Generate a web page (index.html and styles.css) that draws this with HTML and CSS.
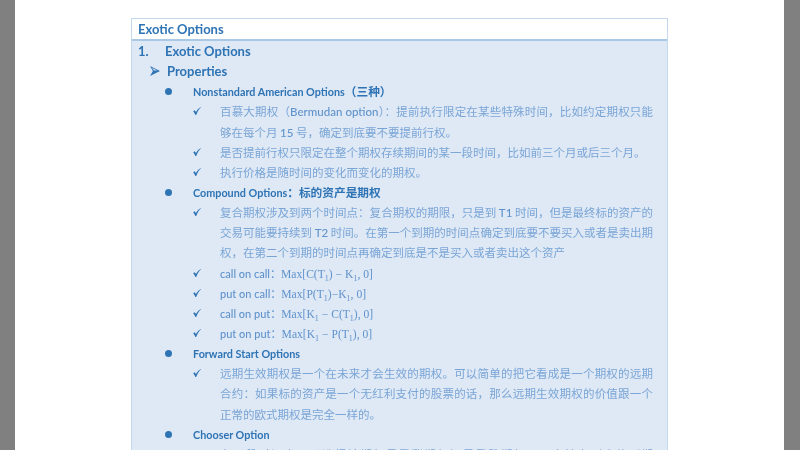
FILE: index.html
```html
<!DOCTYPE html>
<html lang="zh">
<head>
<meta charset="utf-8">
<title>Exotic Options</title>
<link rel="stylesheet" href="styles.css">
</head>
<body>
<svg class="defs" aria-hidden="true"><symbol id="tick" viewBox="0 0 8 8"><path d="M0.2 4.3 L1.7 3.3 L3 5 C4.2 2.9 5.8 1.1 7.8 0 L8 0.3 C6 2.2 4.4 4.8 3.2 8 L2.4 8 C1.8 6.4 1.1 5.3 0.2 4.3 Z"/></symbol></svg>
<div class="rail"></div>
<div class="page">
  <section class="box">
    <header class="box-title">Exotic Options</header>
    <div class="box-body">
      <div class="row h1"><span class="num">1.</span><span>Exotic Options</span></div>
      <div class="row h2"><svg class="arrow" viewBox="0 0 9 9" aria-hidden="true"><path d="M0 0 L9 4.6 L0 9 L2.6 4.6 Z" fill="#2e74b5"/><path d="M1.7 1.5 L6.4 4 L3.6 4 Z" fill="#dfe8f5"/></svg><span>Properties</span></div>
      <div class="row h3"><span class="dot"></span><span>Nonstandard American Options<span class="zh">（三种）</span></span></div>
      <div class="row item"><svg class="check" aria-hidden="true"><use href="#tick"/></svg><div class="text"><p class="fill">百慕大期权（<span class="en">Bermudan option</span>）：提前执行限定在某些特殊时间，比如约定期权只能</p><p>够在每个月 <span class="en">15</span> 号，确定到底要不要提前行权。</p></div></div>
      <div class="row item"><svg class="check" aria-hidden="true"><use href="#tick"/></svg><div class="text"><p>是否提前行权只限定在整个期权存续期间的某一段时间，比如前三个月或后三个月。</p></div></div>
      <div class="row item"><svg class="check" aria-hidden="true"><use href="#tick"/></svg><div class="text"><p>执行价格是随时间的变化而变化的期权。</p></div></div>
      <div class="row h3"><span class="dot"></span><span>Compound Options<span class="zh">：标的资产是期权</span></span></div>
      <div class="row item"><svg class="check" aria-hidden="true"><use href="#tick"/></svg><div class="text"><p class="fill">复合期权涉及到两个时间点：复合期权的期限，只是到 <span class="en">T1</span> 时间，但是最终标的资产的</p><p class="fill">交易可能要持续到 <span class="en">T2</span> 时间。在第一个到期的时间点确定到底要不要买入或者是卖出期</p><p>权，在第二个到期的时间点再确定到底是不是买入或者卖出这个资产</p></div></div>
      <div class="row item"><svg class="check" aria-hidden="true"><use href="#tick"/></svg><div class="text"><p class="en">call on call：<span class="math">Max[C(T<sub>1</sub>) − K<sub>1</sub>, 0]</span></p></div></div>
      <div class="row item"><svg class="check" aria-hidden="true"><use href="#tick"/></svg><div class="text"><p class="en">put on call：<span class="math">Max[P(T<sub>1</sub>)−K<sub>1</sub>, 0]</span></p></div></div>
      <div class="row item"><svg class="check" aria-hidden="true"><use href="#tick"/></svg><div class="text"><p class="en">call on put：<span class="math">Max[K<sub>1</sub> − C(T<sub>1</sub>), 0]</span></p></div></div>
      <div class="row item"><svg class="check" aria-hidden="true"><use href="#tick"/></svg><div class="text"><p class="en">put on put：<span class="math">Max[K<sub>1</sub> − P(T<sub>1</sub>), 0]</span></p></div></div>
      <div class="row h3"><span class="dot"></span><span>Forward Start Options</span></div>
      <div class="row item"><svg class="check" aria-hidden="true"><use href="#tick"/></svg><div class="text"><p class="fill">远期生效期权是一个在未来才会生效的期权。可以简单的把它看成是一个期权的远期</p><p class="fill">合约：如果标的资产是一个无红利支付的股票的话，那么远期生效期权的价值跟一个</p><p>正常的欧式期权是完全一样的。</p></div></div>
      <div class="row h3"><span class="dot"></span><span>Chooser Option</span></div>
      <div class="row item"><svg class="check" aria-hidden="true"><use href="#tick"/></svg><div class="text"><p class="fill">在一段时间内可以选择该期权是看涨期权还是看跌期权，一直持有到合约到期</p></div></div>
    </div>
  </section>
</div>
<div class="scrollbar"></div>
</body>
</html>
```
FILE: styles.css
```css
html, body {
  margin: 0;
  height: 450px;
  overflow: hidden;
  background: #fff;
}
body {
  display: flex;
  font-family: "Noto Sans CJK SC", Lato, sans-serif;
  color: #79a5d6;
}
.defs {
  display: none;
}
.rail {
  flex: none;
  width: 15px;
  background: #808080;
}
.page {
  flex: 1;
  padding: 18px 0 0 116px;
  filter: blur(0.35px);
}
.scrollbar {
  flex: none;
  width: 16px;
  background: #808080;
}
.box {
  width: 537px;
  box-sizing: border-box;
  border: 1px solid #c5d9ee;
  background: #dfe8f5;
  font-size: 11.5px;
}
.box-title {
  height: 20px;
  padding-left: 6px;
  background: #fff;
  border-bottom: 2px solid #a9c8e6;
  font: 700 13px/21px Lato, sans-serif;
  color: #2e74b5;
}
.box-body {
  padding: 1px 14px 0 6px;
  height: 600px;
}
.row {
  display: flex;
  align-items: flex-start;
}
.h1 {
  height: 20.15px;
  font: 700 13px/19px Lato, sans-serif;
  color: #2e74b5;
}
.num {
  width: 27px;
}
.h2 {
  height: 20.15px;
  padding-left: 12px;
  font: 700 13px/19px Lato, sans-serif;
  color: #2e74b5;
}
.arrow {
  flex: none;
  width: 10px;
  height: 10px;
  margin: 4px 7px 0 0;
}
.h3 {
  height: 20.15px;
  padding-left: 27px;
  font: 700 10.8px/20px Lato, "Noto Sans CJK SC", sans-serif;
  color: #2e74b5;
}
.zh {
  font-family: "Noto Sans CJK SC", sans-serif;
  font-size: 11.7px;
  line-height: 0;
}
.dot {
  flex: none;
  width: 7px;
  height: 7px;
  margin: 6px 21px 0 0;
  border-radius: 50%;
  background: #2e74b5;
}
.item {
  padding-left: 55px;
}
.check {
  flex: none;
  width: 8px;
  height: 8px;
  margin: 5px 19px 0 0;
  fill: #2e74b5;
}
.text {
  flex: 1;
  min-width: 0;
}
.text p {
  margin: 0;
  height: 20.15px;
  line-height: 19px;
  white-space: nowrap;
}
.text p.fill {
  white-space: normal;
  overflow: hidden;
  text-align: justify;
  text-align-last: justify;
}
.en {
  font-family: Lato, "Noto Sans CJK SC", sans-serif;
  font-weight: 500;
  color: #5f93cc;
  line-height: 0;
}
p.en {
  font-size: 11px;
}
.math {
  font-family: "Liberation Serif", serif;
  font-size: 11.6px;
}
sub {
  font-size: 8px;
  line-height: 0;
}
```
